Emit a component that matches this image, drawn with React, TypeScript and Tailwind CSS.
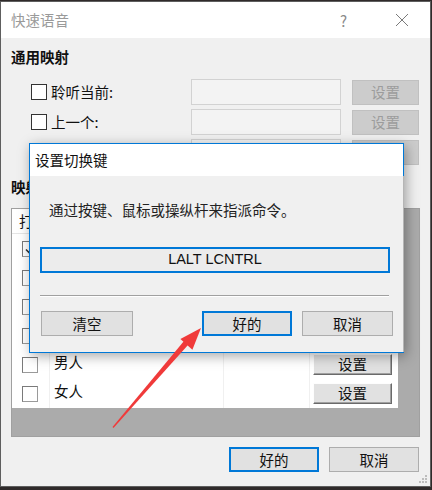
import React from 'react';

const Check: React.FC<{ dark?: boolean; checked?: boolean }> = ({ dark, checked }) => (
  <div
    className={`w-[16px] h-[16px] shrink-0 bg-white flex items-center justify-center border ${
      dark ? 'border-[#333333]' : 'border-[#9a9a9a] border-t-[#7a7a7a] border-l-[#7a7a7a]'
    }`}
  >
    {checked && (
      <svg width="12" height="12" viewBox="0 0 12 12">
        <path d="M2 6.5 L5 9.5 L10 2.5" fill="none" stroke="#333" strokeWidth="1.6" />
      </svg>
    )}
  </div>
);

const WinButton: React.FC<{ label: string; primary?: boolean; w: string }> = ({ label, primary, w }) => (
  <div
    className={`${w} h-[25px] shrink-0 bg-[#e1e1e1] flex items-center justify-center text-[14.5px] text-[#111] ${
      primary ? 'border-2 border-[#0078d7]' : 'border border-[#adadad]'
    }`}
  >
    {label}
  </div>
);

// third label sits under the dialog, so it is left empty
const mappingRows = ['聆听当前:', '上一个:', ''];

// first four names are covered by the dialog
const tableRows = [
  { name: '', checked: true },
  { name: '', checked: false },
  { name: '', checked: false },
  { name: '', checked: false },
  { name: '男人', checked: false },
  { name: '女人', checked: false },
];

export default function App() {
  return (
    <div className="relative w-[432px] h-[490px] bg-[#2f2a2a] pt-px font-['Noto_Sans_CJK_SC',sans-serif] overflow-hidden">
      <div className="relative w-[431px] h-[486px] border border-[#5e5e5e] bg-[#f0f0f0] flex flex-col">
        {/* title bar */}
        <div className="h-[36px] bg-white flex items-center pl-[10px] shrink-0">
          <span className="text-[14.5px] text-[#9a9a9a] leading-none">快速语音</span>
          <span className="ml-auto text-[15px] text-[#8a8a8a] leading-none mr-[48px]">?</span>
          <svg width="14" height="14" viewBox="0 0 14 14" className="mr-[21px]">
            <path d="M1 1 L13 13 M13 1 L1 13" stroke="#7a7a7a" strokeWidth="1" />
          </svg>
        </div>

        <div className="flex flex-col pl-[10px] pr-[10px]">
          <div className="mt-[10px] h-[18px] leading-[18px] text-[14.5px] font-bold text-[#111]">通用映射</div>

          <div className="mt-[13px] flex flex-col gap-[4px]">
            {mappingRows.map((label, i) => (
              <div key={i} className="h-[26px] flex items-center">
                <div className="ml-[20px] w-[160px] flex items-center gap-[4px]">
                  <Check dark />
                  {label && <span className="text-[14.5px] text-[#111] leading-none">{label}</span>}
                </div>
                <div className="w-[150px] h-[26px] bg-[#f3f3f3] border border-[#d2d2d2]" />
                <div className="ml-[11px] w-[67px] h-[25px] bg-[#cccccc] border border-[#c0c0c0] flex items-center justify-center text-[14.5px] text-[#9c9c9c]">
                  设置
                </div>
              </div>
            ))}
          </div>

          <div className="mt-[13px] h-[18px] leading-[18px] text-[14.5px] font-bold text-[#111]">映射</div>

          {/* list view */}
          <div className="mt-[12px] w-[409px] h-[229px] border border-[#a0a0a0] bg-[#ababab] flex flex-col">
            <div className="w-[386px] h-[25px] bg-white flex border-b border-[#e5e5e5] text-[14.5px] text-[#111]">
              <div className="w-[38px] border-r border-[#e5e5e5] pl-[7px] flex items-center leading-none">打开</div>
              <div className="w-[174px] border-r border-[#e5e5e5]" />
              <div className="w-[86px] border-r border-[#e5e5e5]" />
              <div className="w-[88px]" />
            </div>
            {tableRows.map((row, i) => (
              <div key={i} className="w-[386px] h-[29px] bg-white flex text-[14.5px] text-[#111]">
                <div className="w-[38px] border-r border-[#f0f0f0] pl-[10px] flex items-center">
                  <Check checked={row.checked} />
                </div>
                <div className="w-[174px] border-r border-[#f0f0f0] pl-[4px] flex items-center leading-none pb-[4px]">
                  {row.name}
                </div>
                <div className="w-[86px] border-r border-[#f0f0f0]" />
                <div className="w-[88px] flex items-center pl-[3px]">
                  {i >= 4 && (
                    <div className="w-[79px] h-[21px] bg-[#e1e1e1] border border-t-[#fdfdfd] border-l-[#fdfdfd] border-r-[#6a6a6a] border-b-[#6a6a6a] shadow-[inset_-1px_-1px_0_#a0a0a0] flex items-center justify-center leading-none">
                      设置
                    </div>
                  )}
                </div>
              </div>
            ))}
          </div>

          <div className="mt-[10px] flex justify-end gap-[10px] pr-px">
            <WinButton label="好的" primary w="w-[90px]" />
            <WinButton label="取消" w="w-[90px]" />
          </div>
        </div>

        {/* size grip */}
        <svg width="10" height="10" viewBox="0 0 10 10" className="absolute right-[2px] bottom-[2px]">
          {[[8, 2], [8, 5], [8, 8], [5, 5], [5, 8], [2, 8]].map(([x, y]) => (
            <rect key={`${x}-${y}`} x={x - 1} y={y - 1} width="2" height="2" fill="#bdbdbd" />
          ))}
        </svg>
      </div>

      {/* hotkey dialog */}
      <div className="absolute left-[29px] top-[143px] w-[375px] h-[210px] flex flex-col border-l border-t border-b border-[#0078d7] shadow-[2px_3px_12px_rgba(0,0,0,0.35)]">
        <div className="h-[32px] bg-white border-r border-[#0078d7] flex items-center pl-[5px] shrink-0">
          <span className="text-[14.5px] text-[#111] leading-none">设置切换键</span>
        </div>
        <div className="flex-1 bg-[#f0f0f0] border-r border-[#b5b5b5] flex flex-col">
          <div className="mt-[26px] ml-[19px] h-[15px] leading-[15px] text-[14.5px] text-[#222]">
            通过按键、鼠标或操纵杆来指派命令。
          </div>
          <div className="mt-[30px] ml-[10px] w-[350px] h-[26px] border-2 border-[#0078d7] bg-[#ececec] flex items-center justify-center font-['Liberation_Sans',sans-serif] text-[14.5px] text-[#111]">
            LALT LCNTRL
          </div>
          <div className="mt-[22px] ml-[10px] w-[349px] border-t border-[#a0a0a0] border-b border-b-white" />
          <div className="mt-[14px] ml-[11px] flex">
            <WinButton label="清空" w="w-[92px]" />
            <div className="ml-[69px]">
              <WinButton label="好的" primary w="w-[90px]" />
            </div>
            <div className="ml-[10px]">
              <WinButton label="取消" w="w-[91px]" />
            </div>
          </div>
        </div>
      </div>

      {/* red arrow */}
      <svg width="432" height="490" viewBox="0 0 432 490" className="absolute left-0 top-0 pointer-events-none">
        <polygon points="112.5,427 113.5,428 188,345 184,341" fill="#f03a3a" />
        <polygon points="201,328 180.4,339.1 192.4,349.7" fill="#f03a3a" />
      </svg>
    </div>
  );
}
